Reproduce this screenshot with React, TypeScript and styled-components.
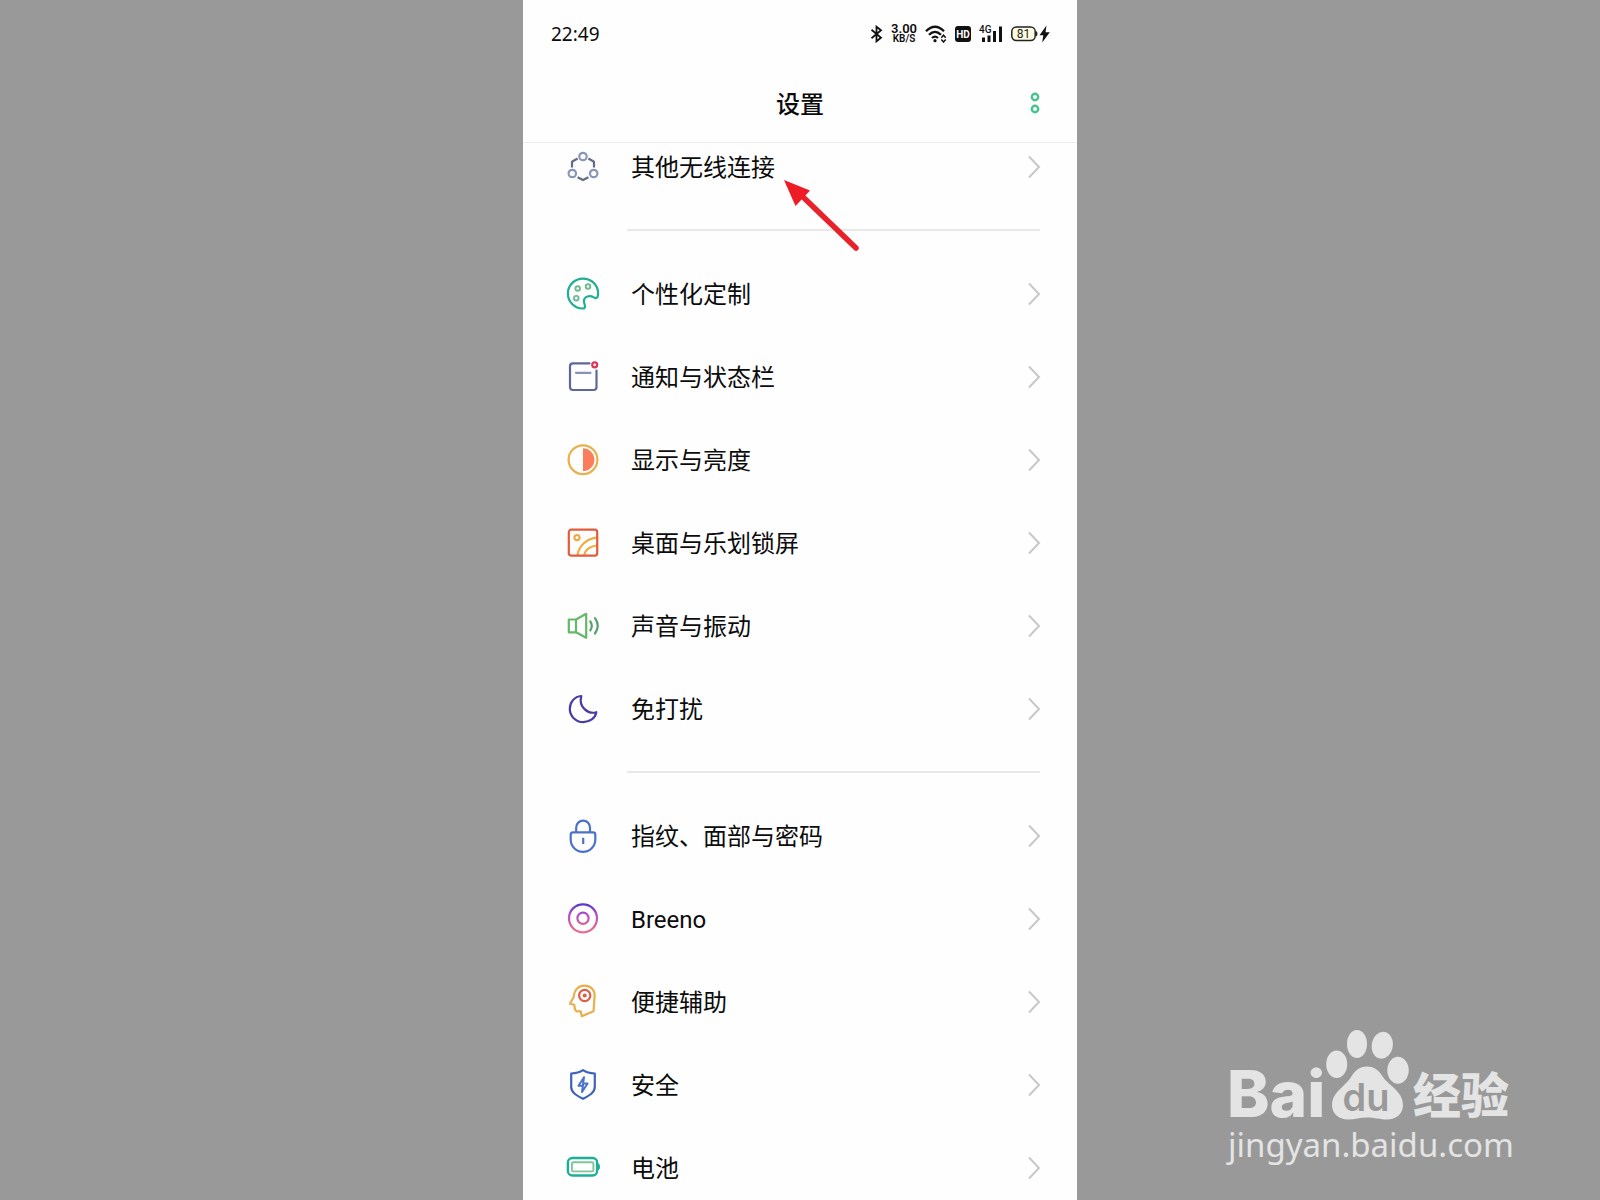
import React from "react";
import styled, { createGlobalStyle } from "styled-components";

const cjk = '"Noto Sans CJK SC", "Noto Sans CJK TC", sans-serif';

const GlobalStyle = createGlobalStyle`
  *, *::before, *::after { box-sizing: border-box; }
  body { margin: 0; background: #999999; }
`;

const Page = styled.div`
  display: flex;
  justify-content: center;
  position: relative;
  height: 100vh;
  overflow: hidden;
  background: #999999;
`;

const Phone = styled.main`
  display: flex;
  flex-direction: column;
  position: relative;
  width: 100%;
  max-width: 554px;
  overflow: hidden;
  background: #fefefe;
  color: #0c0c0c;
  font-family: Roboto, ${cjk};
`;

const StatusBar = styled.div`
  display: flex;
  flex: none;
  align-items: center;
  justify-content: space-between;
  height: 67px;
  padding: 0 27px 0 28px;
`;

const Clock = styled.time`
  font: 400 19px/24px "Noto Sans", sans-serif;
`;

const StatusIcons = styled.div`
  display: flex;
  align-items: center;
  gap: 8px;

  svg { display: block; }
`;

const Speed = styled.div`
  display: flex;
  flex-direction: column;
  align-items: center;
  font: 600 13px/10px Roboto, sans-serif;

  small { font-size: 10px; line-height: 10px; }
`;

const Header = styled.header`
  display: grid;
  flex: none;
  grid-template-columns: 1fr auto 1fr;
  align-items: center;
  height: 76px;
  padding: 0 30px 4px;
  border-bottom: 1px solid #ececec;
`;

const Title = styled.h1`
  grid-column: 2;
  margin: 0;
  font: 500 24px/32px ${cjk};
`;

const MoreButton = styled.button`
  justify-self: end;
  display: block;
  padding: 0;
  border: 0;
  background: none;
  cursor: pointer;

  svg { display: block; }
`;

const Scroller = styled.nav`
  flex: 1;
  min-height: 0;
  overflow: hidden;
`;

const Groups = styled.div`
  margin-top: -18px;
`;

const Group = styled.ul`
  margin: 0;
  padding: 0;
  list-style: none;
`;

const Divider = styled.hr`
  height: 2px;
  margin: 21px 37px 21px 104px;
  border: 0;
  background: #e9e9e9;
`;

const Row = styled.button`
  display: flex;
  align-items: center;
  width: 100%;
  height: 83px;
  padding: 0 36px 0 40px;
  border: 0;
  background: none;
  color: inherit;
  font: 400 24px/36px Roboto, ${cjk};
  text-align: left;
  cursor: pointer;

  svg { display: block; flex: none; }
`;

const Label = styled.span`
  flex: 1;
  padding: 2px 0 0 28px;
`;

const Pointer = styled.svg`
  position: absolute;
  left: 257px;
  top: 176px;
  pointer-events: none;
`;

const Watermark = styled.aside`
  display: flex;
  flex-direction: column;
  align-items: flex-start;
  position: absolute;
  right: 86px;
  bottom: 32px;
  color: #e4e4e4;

  svg { display: block; overflow: visible; }
`;

const Domain = styled.span`
  font: 400 33px/46px "Noto Sans", sans-serif;
`;

const Icon = ({ children }: { children: React.ReactNode }) => (
  <svg width="40" height="40" viewBox="0 0 40 40" fill="none" strokeWidth="2.2" strokeLinecap="round" strokeLinejoin="round" aria-hidden="true">
    {children}
  </svg>
);

const WirelessIcon = () => (
  <Icon>
    <path stroke="#656b84" strokeLinecap="butt" d="M9 20.5V14.700L14.600 11.500M31 20.5V14.700L25.400 11.500M14.600 30.200L20 33L25.400 30.200" />
    <g stroke="#8995ba">
      <circle cx="20" cy="9.5" r="3.700" />
      <circle cx="9.300" cy="26.500" r="3.700" />
      <circle cx="30.700" cy="26.500" r="3.700" />
    </g>
  </Icon>
);

const PaletteIcon = () => (
  <Icon>
    <path
      stroke="#22ae94"
      d="M20 34.500C11.200 34.500 4.900 27.500 4.900 19.400C4.900 11.100 11.700 4.600 20 4.600C28.500 4.600 35.100 11 35.100 19.300C35.100 22.300 34.500 24.100 32.800 24.100C31.200 24.100 30 22.100 26.800 22.100C23.300 22.100 20.900 24.300 20.900 27.300C20.900 29.300 22 30.300 22 32.200C22 33.600 21.200 34.500 20 34.500Z"
    />
    <g stroke="#6dbb90" strokeWidth="1.9">
      <circle cx="14.700" cy="14.500" r="2.300" />
      <circle cx="25" cy="12.500" r="2.300" />
      <circle cx="13.300" cy="24.200" r="2.300" />
    </g>
  </Icon>
);

const NoticeIcon = () => (
  <Icon>
    <path stroke="#5d679b" d="M26.500 6.300H10Q7 6.300 7 9.300V30Q7 33 10 33H30.500Q33.500 33 33.500 30V13.500" />
    <path stroke="#8491be" d="M13 15.800H27.500" />
    <circle cx="31.700" cy="7.800" r="2.500" stroke="#df3558" />
  </Icon>
);

const DisplayIcon = () => (
  <Icon>
    <circle cx="20" cy="19.700" r="14.400" stroke="#eab04c" />
    <path fill="#fb7e5c" d="M20 8.300A11.400 11.400 0 0 1 20 31.100Z" />
  </Icon>
);

const WallpaperIcon = () => (
  <Icon>
    <g stroke="#efab42">
      <circle cx="14" cy="14.600" r="2.600" />
      <path d="M14.500 31.700C16 23.200 23 16 33.500 14.700M21.300 31.700C22.500 27.200 26.500 23.400 33.500 22.500" />
    </g>
    <rect x="5.800" y="6.700" width="28.400" height="26" rx="2.500" stroke="#e05c3c" />
  </Icon>
);

const SoundIcon = () => (
  <Icon>
    <path stroke="#65b769" d="M5.800 13.500H13V26.300H5.800ZM13 13.500L23.200 7.800V31.800L13 26.300" />
    <path stroke="#56a06d" d="M27.300 15.500Q30.300 19.800 27.300 24.300M32 12.200Q37.500 19.800 32 27.500" />
  </Icon>
);

const MoonIcon = () => (
  <Icon>
    <path stroke="#483ba4" d="M18.300 7C11.500 7.500 6.800 13.200 6.800 19.800C6.800 27.200 12.800 33.200 20.200 33.200C26.800 33.200 32.200 29.300 33.300 23.200C25 25.700 15.300 18 18.300 7Z" />
  </Icon>
);

const LockIcon = () => (
  <Icon>
    <path stroke="#4b72cb" d="M13.200 16.300V11.500A6.900 6.900 0 0 1 27 11.500V16.300M10.200 16.300H30Q32.300 16.300 32.300 18.600V23.500A12.300 12.300 0 0 1 7.700 23.500V18.600Q7.700 16.300 10.200 16.300Z" />
    <path stroke="#4b72cb" strokeLinecap="butt" d="M20.200 21.800V28" />
  </Icon>
);

const BreenoIcon = () => (
  <Icon>
    <defs>
      <linearGradient id="breeno-ring" x1="20" y1="5" x2="20" y2="34" gradientUnits="userSpaceOnUse">
        <stop offset="0" stopColor="#5a36c4" />
        <stop offset="0.35" stopColor="#b04fcf" />
        <stop offset="0.75" stopColor="#e0618c" />
        <stop offset="1" stopColor="#ea6f9a" />
      </linearGradient>
    </defs>
    <circle cx="20" cy="19.300" r="14" stroke="url(#breeno-ring)" />
    <circle cx="20" cy="19.300" r="5.600" stroke="url(#breeno-ring)" />
  </Icon>
);

const AssistIcon = () => (
  <Icon>
    <path stroke="#eaae4b" d="M18.800 34.300L17.700 29.300H14Q12.300 29 12 27.300L11.200 22.800L6.900 21.700L10.600 15.300C11.200 7.800 15.500 3.700 21.500 3.700C28 3.700 32 8.300 31.600 14.300L30.500 29.200Z" />
    <circle cx="21.700" cy="13.500" r="5.600" stroke="#dc5f49" />
    <circle cx="21.700" cy="13.500" r="2" fill="#dc5f49" />
  </Icon>
);

const ShieldIcon = () => (
  <Icon>
    <path stroke="#3f62bb" d="M20 5.200C23.500 7.500 27.500 8.300 31.800 8.500V22C31.800 27.500 26.500 30.500 20 33.800C13.500 30.500 8.200 27.500 8.200 22V8.500C12.500 8.300 16.500 7.500 20 5.200Z" />
    <path stroke="#4b72cb" strokeWidth="2" d="M21 12.200L15.500 20.800H20.200M19 27L24.600 18.500H20M21 12.200L19 27" />
  </Icon>
);

const BatteryIcon = () => (
  <Icon>
    <rect x="4.900" y="10" width="29.200" height="17.500" rx="4.500" stroke="#1daf95" strokeWidth="2.400" />
    <rect x="8.900" y="14.200" width="21.500" height="9.200" rx="1.500" stroke="#80c49a" strokeWidth="1.900" />
    <path fill="#1daf95" d="M35 15.500H35.500Q37 16 37 18.800T35.500 22H35Z" />
  </Icon>
);

const Chevron = () => (
  <svg width="14" height="24" viewBox="0 0 14 24" fill="none" stroke="#c8c8c8" strokeWidth="2" aria-hidden="true">
    <path d="M2 1.500L12 12L2 22.500" />
  </svg>
);

type Item = { label: string; Glyph: () => React.ReactElement };

const groups: Item[][] = [
  [{ label: "其他无线连接", Glyph: WirelessIcon }],
  [
    { label: "个性化定制", Glyph: PaletteIcon },
    { label: "通知与状态栏", Glyph: NoticeIcon },
    { label: "显示与亮度", Glyph: DisplayIcon },
    { label: "桌面与乐划锁屏", Glyph: WallpaperIcon },
    { label: "声音与振动", Glyph: SoundIcon },
    { label: "免打扰", Glyph: MoonIcon },
  ],
  [
    { label: "指纹、面部与密码", Glyph: LockIcon },
    { label: "Breeno", Glyph: BreenoIcon },
    { label: "便捷辅助", Glyph: AssistIcon },
    { label: "安全", Glyph: ShieldIcon },
    { label: "电池", Glyph: BatteryIcon },
  ],
];

const StatusGlyphs = () => (
  <StatusIcons>
    <svg width="13" height="18" viewBox="0 0 13 18" fill="none" stroke="#111" strokeWidth="1.800" aria-hidden="true">
      <path d="M1.500 4.800L11 12.700L6.500 16.300V1.700L11 5.300L1.500 13.200" />
    </svg>
    <Speed>
      3.00
      <small>KB/S</small>
    </Speed>
    <svg width="22" height="18" viewBox="0 0 22 18" fill="none" stroke="#111" strokeWidth="2.300" aria-hidden="true">
      <path d="M1 6.300Q10 -2.700 19 6.300M4 9.800Q10 3.800 16 9.800M7 13Q10 10.200 13 13" />
      <circle cx="10" cy="15.700" r="1.600" fill="#111" stroke="none" />
      <path d="M16.300 12.700L18.500 10.200L20.700 12.700M16.300 14.500L18.500 17L20.700 14.500" strokeWidth="1.500" />
    </svg>
    <svg width="16" height="16" viewBox="0 0 16 16" role="img" aria-label="HD">
      <rect width="16" height="16" rx="3" fill="#111" />
      <text x="8" y="12" fill="#fff" fontFamily="Roboto, sans-serif" fontSize="10" fontWeight="700" textAnchor="middle">HD</text>
    </svg>
    <svg width="24" height="18" viewBox="0 0 24 18" aria-hidden="true">
      <text x="0" y="8" fill="#111" fontFamily="Roboto, sans-serif" fontSize="10" fontWeight="500">4G</text>
      <path fill="#111" d="M3 12.500H6V17H3ZM8.500 10.500H11.500V17H8.500ZM14 6H17V17H14ZM20 1.500H23V17H20Z" />
    </svg>
    <svg width="39" height="18" viewBox="0 0 39 18" aria-hidden="true">
      <rect x="0.800" y="2" width="23.400" height="13.500" rx="4.500" fill="#fdfbe0" stroke="#222" strokeWidth="1.500" />
      <path fill="#222" d="M25 6Q26.500 6.500 26.500 8.800T25 11.500Z" />
      <text x="12.500" y="13" fill="#222" fontFamily="Roboto, sans-serif" fontSize="12" textAnchor="middle">81</text>
      <path fill="#111" d="M35.500 0.500L28.500 10.300H32.300L31.200 17.500L38.800 7.200H34.500Z" />
    </svg>
  </StatusIcons>
);

const BaiduMark = () => (
  <svg width="286" height="94" viewBox="0 0 286 94" fill="currentColor" role="img" aria-label="Bai du 经验">
    <text x="-1" y="89" fontFamily="Inter, sans-serif" fontSize="64" fontWeight="800">Bai</text>
    <ellipse cx="108.700" cy="36.300" rx="10.500" ry="13.700" />
    <ellipse cx="129" cy="16" rx="10" ry="14" />
    <ellipse cx="154.300" cy="17.300" rx="10.500" ry="13.500" transform="rotate(10 154.300 17.300)" />
    <ellipse cx="170" cy="42.300" rx="10.700" ry="13.500" />
    <path d="M139 38.500C147 38.500 151 43 155 49C160 57 175 63 175 77C175 86 168 91.500 159 91.500C152 91.500 147 89.500 139 89.500C132 89.500 127 91.500 120 91.500C110 91.500 104 85 104 77C104 64 118 58 123 49C127 43 131 38.500 139 38.500Z" />
    <text x="138" y="83" fill="#999999" fontFamily="Inter, sans-serif" fontSize="38" fontWeight="600" textAnchor="middle">du</text>
    <text x="185" y="85" fontFamily="'Noto Sans CJK SC', sans-serif" fontSize="48" fontWeight="900">经验</text>
  </svg>
);

export default function App() {
  return (
    <>
      <GlobalStyle />
      <Page>
        <Phone>
          <StatusBar>
            <Clock>22:49</Clock>
            <StatusGlyphs />
          </StatusBar>
          <Header>
            <Title>设置</Title>
            <MoreButton type="button" aria-label="更多">
              <svg width="24" height="24" viewBox="0 0 24 24" fill="none" stroke="#45c48d" strokeWidth="2.400">
                <circle cx="12" cy="6" r="3.200" />
                <circle cx="12" cy="18" r="3.200" />
              </svg>
            </MoreButton>
          </Header>
          <Scroller aria-label="设置">
            <Groups>
              {groups.map((items, index) => (
                <React.Fragment key={items[0].label}>
                  {index > 0 && <Divider />}
                  <Group>
                    {items.map(({ label, Glyph }) => (
                      <li key={label}>
                        <Row type="button">
                          <Glyph />
                          <Label>{label}</Label>
                          <Chevron />
                        </Row>
                      </li>
                    ))}
                  </Group>
                </React.Fragment>
              ))}
            </Groups>
          </Scroller>
          <Pointer width="84" height="80" viewBox="0 0 84 80" aria-hidden="true">
            <path d="M22 20L76 72" stroke="#e8222b" strokeWidth="5.500" strokeLinecap="round" />
            <path fill="#ee1c25" d="M4 4L30 14.500L15.500 30Z" />
          </Pointer>
        </Phone>
        <Watermark>
          <BaiduMark />
          <Domain>jingyan.baidu.com</Domain>
        </Watermark>
      </Page>
    </>
  );
}
